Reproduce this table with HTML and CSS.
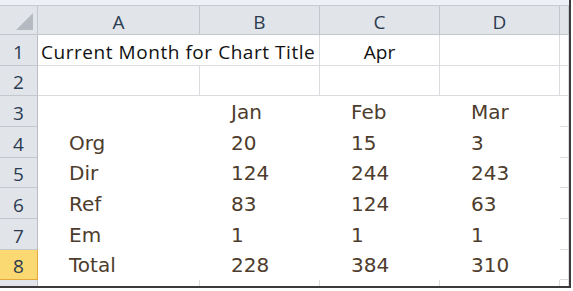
FILE: index.html
```html
<!DOCTYPE html>
<html>
<head>
<meta charset="utf-8">
<link rel="stylesheet" href="styles.css">
</head>
<body>
<div class="frame">
  <div class="topbar"></div>
  <div class="sheet">
    <div class="hdr corner"><span class="tri"></span></div>
    <div class="hdr col">A</div>
    <div class="hdr col">B</div>
    <div class="hdr col">C</div>
    <div class="hdr col">D</div>
    <div class="hdr col e"></div>

    <div class="hdr rn r31">1</div>
    <div class="cell g overflow">Current Month for Chart Title</div>
    <div class="cell g"></div>
    <div class="cell g center">Apr</div>
    <div class="cell g"></div>
    <div class="cell g e"></div>

    <div class="hdr rn r30">2</div>
    <div class="cell g"></div>
    <div class="cell g"></div>
    <div class="cell g"></div>
    <div class="cell g"></div>
    <div class="cell g e"></div>

    <div class="hdr rn r31">3</div>
    <div class="cell d"></div>
    <div class="cell d">Jan</div>
    <div class="cell d">Feb</div>
    <div class="cell d">Mar</div>
    <div class="cell g e"></div>

    <div class="hdr rn r31">4</div>
    <div class="cell d">Org</div>
    <div class="cell d">20</div>
    <div class="cell d">15</div>
    <div class="cell d">3</div>
    <div class="cell g e"></div>

    <div class="hdr rn r30">5</div>
    <div class="cell d">Dir</div>
    <div class="cell d">124</div>
    <div class="cell d">244</div>
    <div class="cell d">243</div>
    <div class="cell g e"></div>

    <div class="hdr rn r31">6</div>
    <div class="cell d">Ref</div>
    <div class="cell d">83</div>
    <div class="cell d">124</div>
    <div class="cell d">63</div>
    <div class="cell g e"></div>

    <div class="hdr rn r31">7</div>
    <div class="cell d">Em</div>
    <div class="cell d">1</div>
    <div class="cell d">1</div>
    <div class="cell d">1</div>
    <div class="cell g e"></div>

    <div class="hdr rn sel">8</div>
    <div class="cell d">Total</div>
    <div class="cell d">228</div>
    <div class="cell d">384</div>
    <div class="cell d">310</div>
    <div class="cell g e"></div>

    <div class="hdr rn last"></div>
    <div class="cell g last"></div>
    <div class="cell g last"></div>
    <div class="cell g last"></div>
    <div class="cell g last"></div>
    <div class="cell g e last"></div>
  </div>
</div>
</body>
</html>
```
FILE: styles.css
```css
html, body {
  margin: 0;
  padding: 0;
  background: #ffffff;
}

.frame {
  width: 571px;
  box-sizing: border-box;
  border-right: 2px solid #3b3b3b;
  border-bottom: 2px solid #3b3b3b;
  background: #ffffff;
}

.topbar {
  height: 5px;
  background: #eef0f7;
  border-bottom: 1px solid #c8ccd6;
}

.sheet {
  display: grid;
  grid-template-columns: 38px 162px 120px 120px 120px 9px;
  grid-template-rows: 29px 31px 30px 31px 31px 30px 31px 31px 30px 6px;
}

.hdr {
  box-sizing: border-box;
  background: #e1e5ea;
  border-right: 1px solid #c3c8cf;
  border-bottom: 1px solid #c3c8cf;
  color: #2c3b50;
  font-family: "Open Sans", "Liberation Sans", sans-serif;
  font-size: 19px;
  display: flex;
  align-items: center;
  justify-content: center;
}

.hdr.col {
  padding-top: 3px;
}

.hdr.rn {
  align-items: flex-end;
  padding-bottom: 0;
  border-right: 1px solid #b9bec6;
}

.hdr.sel {
  background: #fad872;
  border-right: 1px solid #e5a83a;
  border-bottom: 1px solid #e5a83a;
}

.hdr.last {
  border-bottom: none;
}

.corner {
  position: relative;
}

.tri {
  position: absolute;
  right: 4px;
  bottom: 4px;
  width: 0;
  height: 0;
  border-left: 17px solid transparent;
  border-bottom: 17px solid #b5bac2;
}

.cell {
  box-sizing: border-box;
  background: #ffffff;
  display: flex;
  align-items: flex-end;
  white-space: nowrap;
  min-width: 0;
}

.cell.g {
  border-right: 1px solid #dadcdf;
  border-bottom: 1px solid #dadcdf;
  font-family: "Open Sans", "Liberation Sans", sans-serif;
  font-size: 19px;
  color: #111111;
  padding: 0 0 0 3px;
}

.cell.last {
  border-bottom: none;
}

.cell.overflow {
  overflow: visible;
  border-right: none;
  position: relative;
  z-index: 1;
  letter-spacing: 0.55px;
}

.cell.center {
  justify-content: center;
  padding-left: 0;
}

.cell.e {
  padding: 0;
}

.cell.d {
  font-family: "DejaVu Sans", sans-serif;
  font-size: 20px;
  color: #4d3c2c;
  padding: 0 0 3px 31px;
}
```
